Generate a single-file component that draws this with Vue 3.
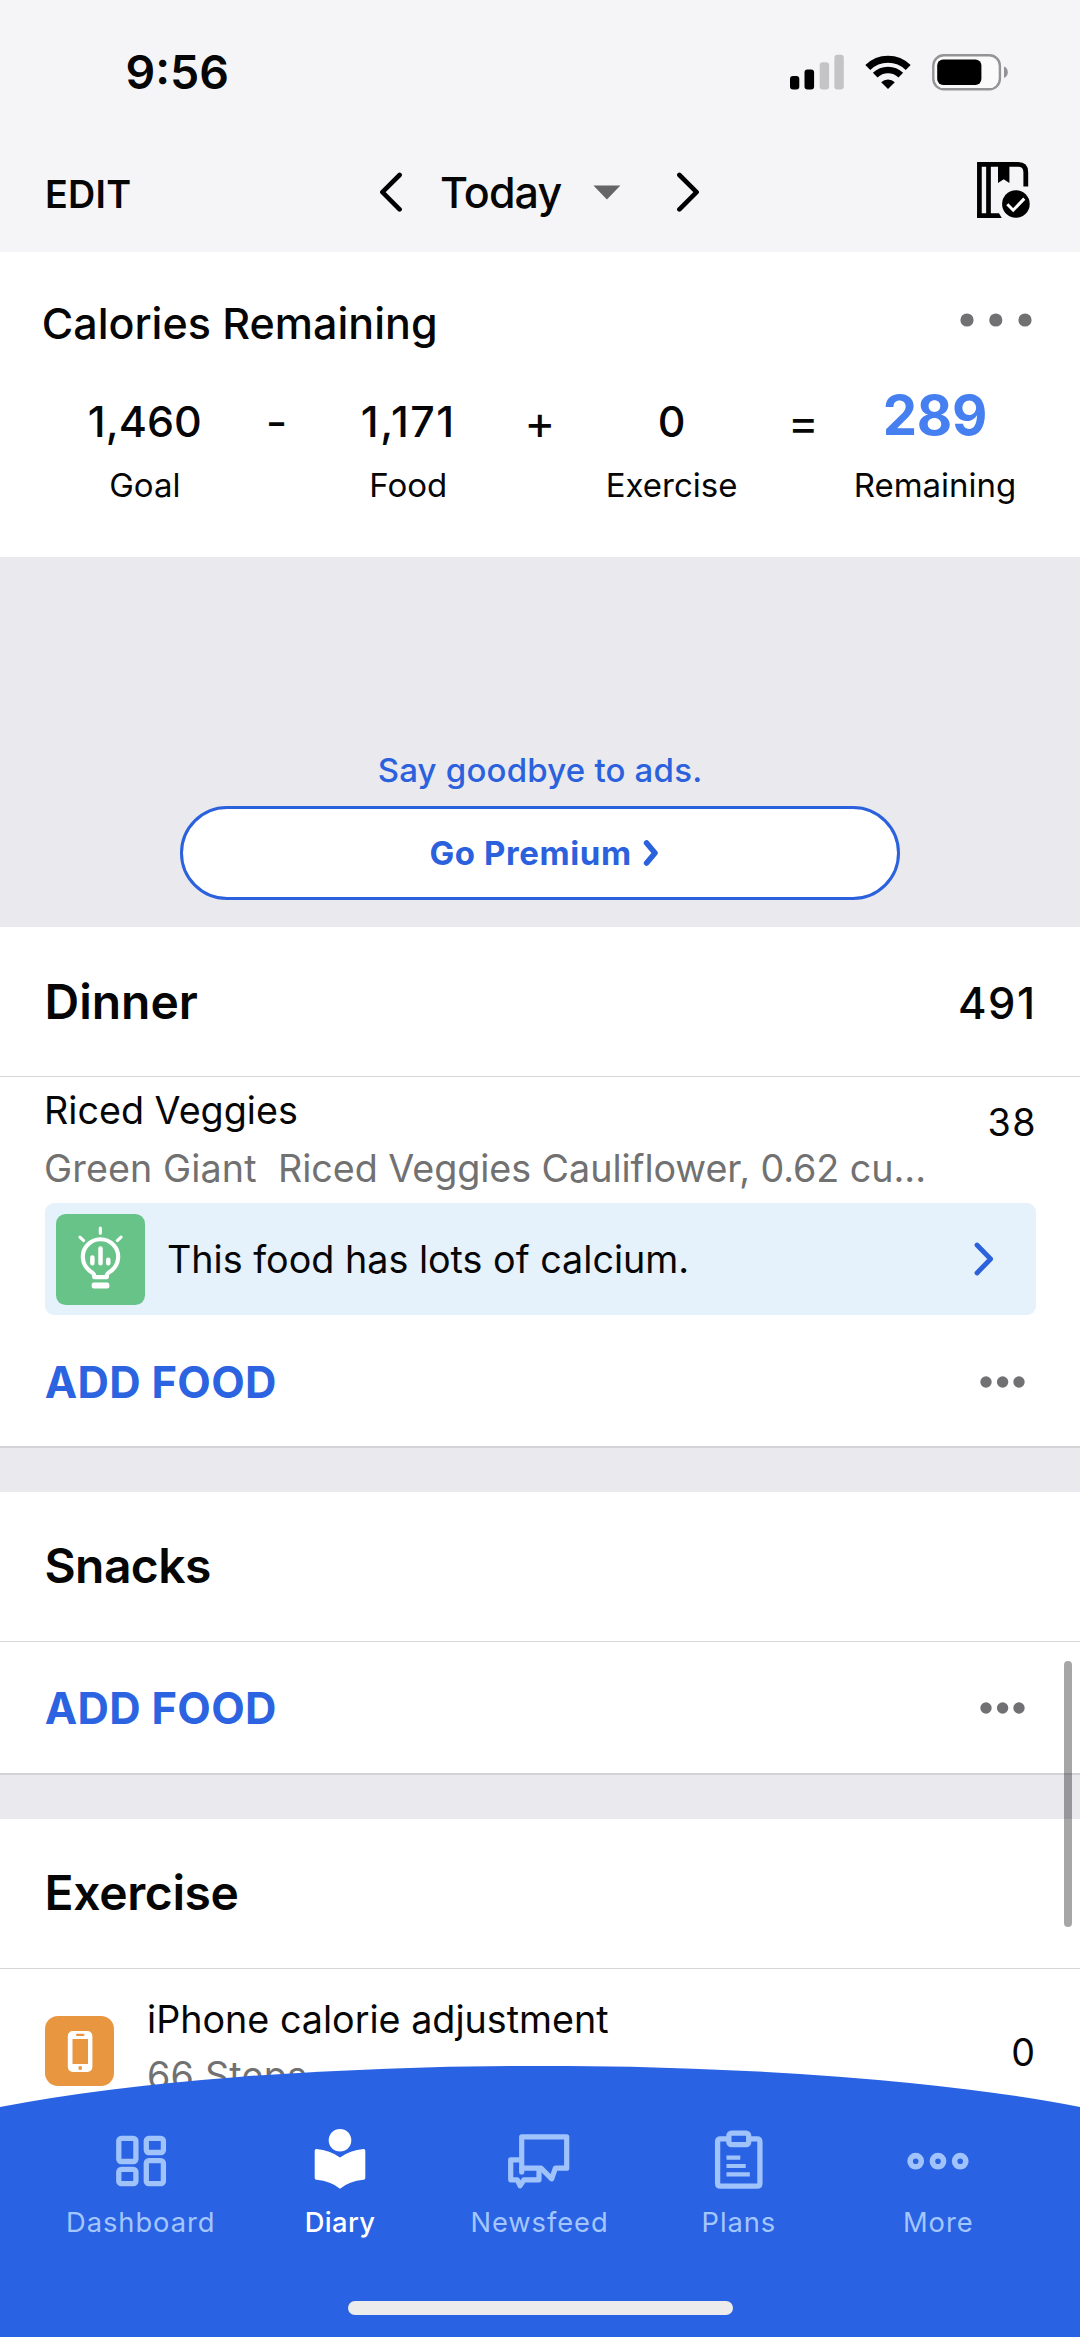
<script setup>
const equation = [
  { value: '1,460', label: 'Goal' },
  { op: '-' },
  { value: '1,171', label: 'Food', spread: true },
  { op: '+' },
  { value: '0', label: 'Exercise' },
  { op: '=' },
  { value: '289', label: 'Remaining', total: true },
]

const tabs = [
  { id: 'dashboard', label: 'Dashboard' },
  { id: 'diary', label: 'Diary', active: true },
  { id: 'newsfeed', label: 'Newsfeed' },
  { id: 'plans', label: 'Plans' },
  { id: 'more', label: 'More' },
]
</script>

<template>
  <div class="screen">
    <header class="top">
      <div class="status">
        <span class="clock">9:56</span>
        <div class="status-icons">
          <svg class="signal" width="54" height="36" viewBox="0 0 54 36">
            <rect x="0" y="22" width="9.3" height="13.4" rx="3" fill="#000" />
            <rect x="14.5" y="15.5" width="9.6" height="19.9" rx="3" fill="#000" />
            <rect x="29.7" y="8.2" width="9.4" height="27.2" rx="3" fill="#c4c4c6" />
            <rect x="44.4" y="0.8" width="9.4" height="34.6" rx="3" fill="#c4c4c6" />
          </svg>
          <svg class="wifi" width="48" height="36" viewBox="0 0 48 36">
            <path d="M3.8 13.4A28.8 28.8 0 0 1 44.2 13.4" fill="none" stroke="#000" stroke-width="7" />
            <path d="M11.2 21.2A18.2 18.2 0 0 1 36.8 21.2" fill="none" stroke="#000" stroke-width="6.6" />
            <path d="M24 35L17.2 28.2A9.6 9.6 0 0 1 30.8 28.2Z" fill="#000" />
          </svg>
          <svg class="battery" width="76" height="37" viewBox="0 0 76 37">
            <rect x="1.3" y="1.3" width="66.6" height="34" rx="10.5" fill="#fafafb" stroke="#949496" stroke-width="2.4" />
            <rect x="5.2" y="5.6" width="44.2" height="25.4" rx="6" fill="#000" />
            <path d="M72 12.6C74.6 13.4 75.8 15.6 75.8 18.3S74.6 23.2 72 24Z" fill="#949496" />
          </svg>
        </div>
      </div>
      <nav class="bar">
        <span class="edit">EDIT</span>
        <div class="date">
          <svg class="prev" width="24" height="40" viewBox="0 0 24 40"><path d="M20.6 3L3.4 20.2L20.6 37.4" /></svg>
          <span class="today">Today</span>
          <svg class="caret" width="28" height="15" viewBox="0 0 28 15"><path d="M0.4 0.6H27.4L13.9 14.4Z" fill="#656567" /></svg>
          <svg class="next" width="24" height="40" viewBox="0 0 24 40"><path d="M3.4 3L20.6 20.2L3.4 37.4" /></svg>
        </div>
        <svg class="journal" width="54" height="57" viewBox="0 0 54 57">
          <path d="M2.4 2.4H41Q48.8 2.4 48.8 10.2V24.5" fill="none" stroke="#000" stroke-width="4.8" />
          <path d="M2.4 0V53.6M11.5 2V54" fill="none" stroke="#000" stroke-width="4.7" />
          <path d="M0 51.2H22L24.8 56H0Z" fill="#000" />
          <path d="M21 2H32.4V21L26.7 17.2L21 21Z" fill="#000" />
          <circle cx="38.9" cy="42" r="13.8" fill="#000" />
          <path d="M30.3 42.3L36.2 48.2L47.3 36.6" fill="none" stroke="#fff" stroke-width="3" />
        </svg>
      </nav>
    </header>

    <section class="summary">
      <div class="summary-head">
        <h2 class="summary-title">Calories Remaining</h2>
        <svg width="72" height="14" viewBox="0 0 72 14" fill="#717173">
          <circle cx="7" cy="7" r="6.6" /><circle cx="35.8" cy="7" r="6.6" /><circle cx="65" cy="7" r="6.6" />
        </svg>
      </div>
      <div class="equation">
        <div v-for="(cell, i) in equation" :key="i" class="cell">
          <span v-if="cell.op" class="op">{{ cell.op }}</span>
          <template v-else>
            <span class="value" :class="{ total: cell.total, spread: cell.spread }">{{ cell.value }}</span>
            <span class="label">{{ cell.label }}</span>
          </template>
        </div>
      </div>
    </section>

    <section class="promo">
      <span class="promo-text">Say goodbye to ads.</span>
      <div class="premium">
        <span>Go Premium</span>
        <svg width="16" height="28" viewBox="0 0 16 28"><path d="M3.600 4L12 14L3.600 24" fill="none" stroke="#2b61dc" stroke-width="5.600" stroke-linecap="round" stroke-linejoin="round" /></svg>
      </div>
    </section>

    <section class="card dinner">
      <div class="card-head">
        <h3>Dinner</h3>
        <span class="sum">491</span>
      </div>
      <div class="food">
        <div class="food-text">
          <span class="name">Riced Veggies</span>
          <span class="detail"><span class="brand">Green Giant&nbsp; </span>Riced Veggies Cauliflower, 0.62 cu...</span>
        </div>
        <span class="kcal">38</span>
      </div>
      <div class="insight">
        <svg class="bulb" width="89" height="91" viewBox="0 0 257 264" preserveAspectRatio="none">
          <rect width="257" height="264" rx="28" fill="#68c389" />
          <g fill="none" stroke="#fff" stroke-linecap="round" stroke-linejoin="round">
            <path d="M128 41V56M69 67L80 77M188 67L177 77" stroke-width="9" />
            <path d="M110 183V176Q108 172 99 166A51 51 0 1 1 158 166Q148 172 147 176V183Z" stroke-width="12" />
            <path d="M105 126V143M128.500 100V143M151 133V143" stroke-width="13" />
          </g>
          <rect x="103" y="199" width="51" height="17" rx="6" fill="#fff" />
        </svg>
        <span class="insight-text">This food has lots of calcium.</span>
        <svg class="go" width="22" height="36" viewBox="0 0 22 36"><path d="M4 4L17.6 18L4 32" fill="none" stroke="#2b62dc" stroke-width="4.8" stroke-linecap="round" stroke-linejoin="round" /></svg>
      </div>
      <div class="add-row">
        <span class="add">ADD FOOD</span>
        <svg width="46" height="12" viewBox="0 0 46 12" fill="#717173"><circle cx="6" cy="6" r="5.7" /><circle cx="22.600" cy="6" r="5.7" /><circle cx="39" cy="6" r="5.7" /></svg>
      </div>
    </section>

    <section class="card snacks">
      <div class="card-head"><h3>Snacks</h3></div>
      <div class="add-row">
        <span class="add">ADD FOOD</span>
        <svg width="46" height="12" viewBox="0 0 46 12" fill="#717173"><circle cx="6" cy="6" r="5.7" /><circle cx="22.600" cy="6" r="5.7" /><circle cx="39" cy="6" r="5.7" /></svg>
      </div>
    </section>

    <section class="card exercise">
      <div class="card-head"><h3>Exercise</h3></div>
      <div class="activity">
        <svg class="phone" width="69" height="70" viewBox="0 0 69 70">
          <rect width="69" height="70" rx="13" fill="#e8963f" />
          <rect x="22.800" y="15" width="24.600" height="41" rx="5" fill="#fff" />
          <rect x="27.500" y="23" width="15.500" height="25" fill="#e8963f" />
          <rect x="31" y="17.800" width="8.500" height="2.200" rx="1" fill="#e8963f" />
          <circle cx="35.200" cy="52" r="1.900" fill="#e8963f" />
        </svg>
        <div class="activity-text">
          <span class="name">iPhone calorie adjustment</span>
          <span class="detail">66 Steps</span>
        </div>
        <span class="kcal">0</span>
      </div>
    </section>

    <div class="scrollbar"></div>

    <footer class="tabbar">
      <svg class="curve" width="1080" height="42" viewBox="0 0 1080 42"><path d="M0 41A700 113 0 0 1 1080 41V42H0Z" fill="#2a62e4" /></svg>
      <div class="tabs">
        <div v-for="t in tabs" :key="t.id" class="tab" :class="{ active: t.active }">
          <svg v-if="t.id === 'dashboard'" class="icon" width="64" height="68" viewBox="0 0 64 68" fill="none" stroke="currentColor" stroke-width="5.300">
            <rect x="9.800" y="10.300" width="17.100" height="23.200" rx="2.500" />
            <rect x="37.300" y="10.300" width="17.100" height="14.200" rx="2.500" />
            <rect x="9.800" y="41.300" width="17.100" height="14.400" rx="2.500" />
            <rect x="37.300" y="32.700" width="17.100" height="23" rx="2.500" />
          </svg>
          <svg v-else-if="t.id === 'diary'" class="icon" width="64" height="68" viewBox="0 0 64 68" fill="currentColor">
            <circle cx="32" cy="12.200" r="11.300" />
            <path d="M8.400 21Q22 22 32 29.600Q42 22 55.600 21Q57.300 21 57.300 22.800V50Q57.300 51.600 55.600 51.700Q41 53 32 60.700Q23 53 8.400 51.700Q6.700 51.600 6.700 50V22.800Q6.700 21 8.400 21Z" />
          </svg>
          <svg v-else-if="t.id === 'newsfeed'" class="icon" width="64" height="68" viewBox="507.300 2127.500 64 68" fill="none" stroke="currentColor" stroke-width="5.200" stroke-linejoin="round">
            <path d="M522 2136.300H567V2167.700H555.700L552 2178.300L541.300 2167.700H522Z" />
            <path d="M520 2159.300H511V2179.300H517.600L520.300 2185.300L524.300 2179.300H539.300V2169" />
            <path d="M522 2168V2171.500" stroke-linecap="round" />
          </svg>
          <svg v-else-if="t.id === 'plans'" class="icon" width="64" height="68" viewBox="0 0 64 68" fill="none" stroke="currentColor" stroke-width="5.300">
            <path d="M22 10.900H13.500Q10.600 10.900 10.600 13.800V55.200Q10.600 58.100 13.500 58.100H50Q52.900 58.100 52.900 55.200V13.800Q52.900 10.900 50 10.900H42" />
            <rect x="21.900" y="5.200" width="19.800" height="11.500" rx="2.500" />
            <path d="M19.500 29.700H33.300M19.500 38H38.700M19.500 46.400H42.800" stroke-width="4.200" />
          </svg>
          <svg v-else class="icon" width="64" height="68" viewBox="0 0 64 68" fill="none" stroke="currentColor" stroke-width="5.600">
            <circle cx="9.700" cy="33.200" r="5.600" /><circle cx="32" cy="33.200" r="5.600" /><circle cx="54.200" cy="33.200" r="5.600" />
          </svg>
          <span class="tab-label">{{ t.label }}</span>
        </div>
      </div>
      <div class="home"></div>
    </footer>
  </div>
</template>

<style>
body { margin: 0; }
</style>

<style scoped>
.screen {
  position: relative;
  width: 1080px;
  height: 2337px;
  overflow: hidden;
  background: #e9e9ee;
  color: #060606;
  font-family: 'Inter', 'Liberation Sans', sans-serif;
}
svg { display: block; flex: none; }

/* header */
.top { height: 252px; background: #f5f5f8; }
.status {
  display: flex;
  align-items: center;
  justify-content: space-between;
  height: 144px;
  padding: 0 72.500px 0 125.400px;
}
.clock { font-size: 46.500px; font-weight: 600; line-height: 56px; }
.status-icons { display: flex; align-items: center; }
.wifi { margin-left: 19.700px; }
.battery { margin-left: 19.800px; }
.bar {
  display: flex;
  align-items: center;
  height: 96px;
  padding: 0 48.700px 0 45px;
}
.edit { width: 334px; padding-top: 4px; font-size: 37.700px; font-weight: 600; letter-spacing: 0.280px; }
.date { display: flex; align-items: center; }
.prev, .next { fill: none; stroke: #000; stroke-width: 4.600; stroke-linecap: round; stroke-linejoin: round; }
.today { margin-left: 37px; font-size: 43px; font-weight: 500; letter-spacing: -0.900px; }
.caret { margin-left: 32px; }
.next { margin-left: 55px; }
.journal { margin-left: auto; margin-bottom: 4px; }

/* calorie summary */
.summary { height: 304.500px; background: #fff; }
.summary-head {
  display: flex;
  align-items: center;
  justify-content: space-between;
  height: 52px;
  padding: 45px 48.500px 0 41.700px;
}
.summary-title { margin: 0; font-size: 43px; font-weight: 500; line-height: 52px; }
.summary-head svg { margin-bottom: 6px; }
.equation {
  display: grid;
  grid-template-columns: repeat(7, 131.700px);
  padding: 46px 0 0 79px;
}
.cell { display: flex; flex-direction: column; align-items: center; white-space: nowrap; }
.value { font-size: 43px; font-weight: 500; line-height: 52px; height: 69.500px; }
.value.spread { letter-spacing: 1.500px; }
.value.total { font-size: 54.500px; font-weight: 700; line-height: 40px; color: #467ff0; letter-spacing: -0.200px; }
.op { font-size: 47px; font-weight: 400; line-height: 53px; }
.label { font-size: 33px; line-height: 40px; }

/* premium prompt */
.promo { display: flex; flex-direction: column; align-items: center; height: 370.500px; color: #2b61dc; }
.promo-text { margin-top: 193px; font-size: 33px; font-weight: 500; line-height: 40px; letter-spacing: 0.200px; }
.premium {
  display: flex;
  align-items: center;
  justify-content: center;
  gap: 11px;
  box-sizing: border-box;
  width: 720px;
  height: 94px;
  margin-top: 16px;
  padding-left: 8px;
  border: 3px solid #2b61dc;
  border-radius: 47px;
  background: #fff;
  font-size: 33px;
  font-weight: 700;
  letter-spacing: 0.600px;
}

/* diary cards */
.card { background: #fff; }
.card-head {
  display: flex;
  align-items: center;
  justify-content: space-between;
  box-sizing: border-box;
  height: 150px;
  padding: 0 45px 0 44.500px;
  border-bottom: 1px solid #d6d6d8;
}
h3 { margin: 0; font-size: 48px; font-weight: 600; line-height: 58px; }
.sum { padding-top: 2px; font-size: 43.500px; font-weight: 500; letter-spacing: 1.500px; margin-right: -1.500px; }
.dinner, .snacks { border-bottom: 2px solid #d3d3d7; margin-bottom: 44px; }
.snacks h3 { letter-spacing: -0.600px; padding-bottom: 1px; }
.exercise h3 { letter-spacing: -0.360px; padding-bottom: 1px; }
.food {
  display: flex;
  justify-content: space-between;
  height: 115px;
  padding: 11px 44.500px 0 44px;
}
.food-text, .activity-text { display: flex; flex-direction: column; white-space: nowrap; }
.name, .detail, .kcal, .insight-text { font-size: 37.700px; line-height: 44px; }
.detail { color: #717171; margin-top: 14px; }
.food .detail { letter-spacing: -0.060px; }
.food .brand { letter-spacing: 0.100px; }
.food .kcal { padding-top: 12px; letter-spacing: 1.500px; margin-right: -1.500px; }
.insight {
  display: flex;
  align-items: center;
  box-sizing: border-box;
  width: 991px;
  height: 112px;
  margin-left: 44.500px;
  padding: 0 41px 0 11px;
  border-radius: 9px;
  background: #e5f1fb;
}
.insight-text { margin-left: 22.500px; }
.go { margin-left: auto; }
.add-row {
  display: flex;
  align-items: center;
  justify-content: space-between;
  box-sizing: border-box;
  height: 131px;
  padding: 0 54px 0 44.800px;
}
.dinner .add-row { padding-top: 2px; }
.add { font-size: 43.500px; font-weight: 700; letter-spacing: 0.280px; color: #2b63e0; }
.exercise { height: 600px; }
.activity { display: flex; padding: 28px 45px 0 44.500px; }
.phone { margin-top: 19px; }
.activity-text { margin-left: 33.500px; }
.activity .detail { margin-top: 11.500px; letter-spacing: 0.200px; }
.activity .kcal { margin-left: auto; padding-top: 33px; }

.scrollbar {
  position: absolute;
  top: 1661px;
  right: 8px;
  width: 8.500px;
  height: 266px;
  border-radius: 5px;
  background: rgba(0, 0, 0, 0.35);
}

/* tab bar overlays the scrolling diary */
.tabbar { position: absolute; left: 0; bottom: 0; width: 1080px; height: 271.500px; }
.curve { margin-bottom: -1px; }
.tabs {
  display: grid;
  grid-template-columns: repeat(5, 199.400px);
  height: 210px;
  padding: 21px 42px 0 41px;
  background: #2a62e4;
}
.tab { display: flex; flex-direction: column; align-items: center; color: #a0c3fb; }
.tab.active { color: #fff; }
.tab-label { margin-top: 10px; font-size: 27.300px; line-height: 34px; letter-spacing: 0.950px; color: #a3c6fd; }
.tab.active .tab-label { color: #fff; font-weight: 500; letter-spacing: 0.380px; }
.home {
  width: 385px;
  height: 14px;
  margin: -37px auto 0;
  position: relative;
  border-radius: 7px;
  background: #ececec;
}
</style>
